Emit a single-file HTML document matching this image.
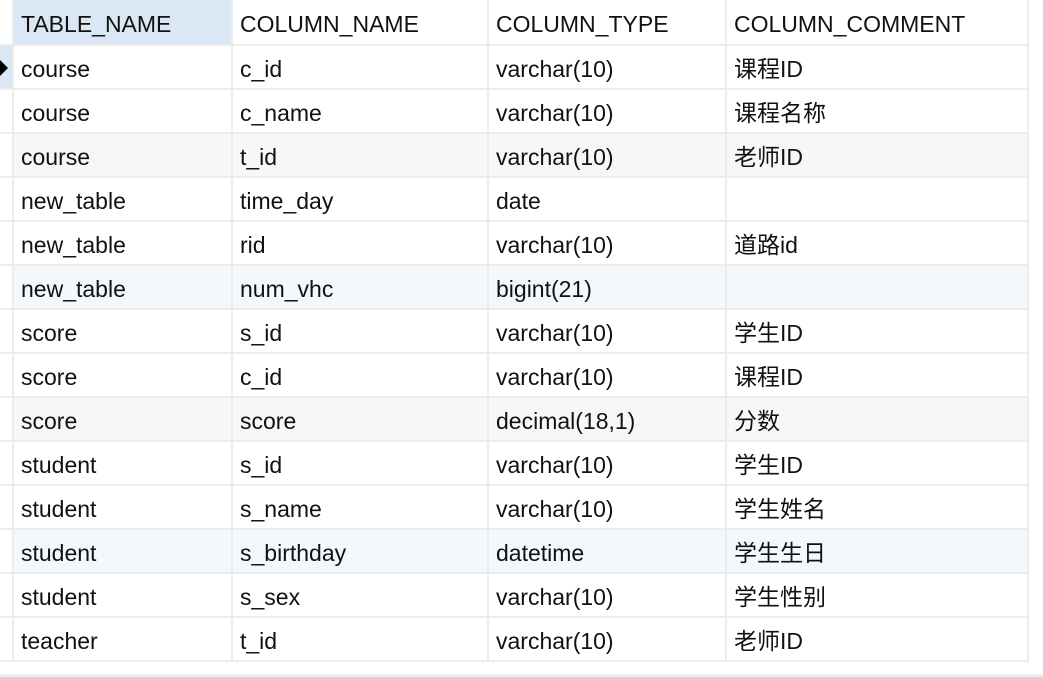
<!DOCTYPE html><html><head><meta charset="utf-8"><style>
body{margin:0;width:1043px;height:677px;background:#fff;overflow:hidden;position:relative;font-family:"Liberation Sans","Noto Sans CJK SC",sans-serif;font-size:23px;color:#111}
.r{position:absolute;left:0;width:1029px;height:42px;}
.c{position:absolute;top:0;height:42px;line-height:47px;padding-left:7px;box-sizing:border-box;border-right:2px solid #ececec;white-space:nowrap}
.c0{left:14px;width:219px}.c1{left:233px;width:256px}.c2{left:489px;width:238px}.c3{left:727px;width:302px}
.g{position:absolute;left:0;width:1029px;height:2px;background:#ececec}
.ind{position:absolute;left:0;width:14px;height:42px;border-right:2px solid #ececec;box-sizing:border-box}
</style></head><body>
<div class="r" style="top:0;height:44px">
<div class="ind" style="height:44px"></div>
<div class="c c0" style="background:#dae8f5;height:44px;line-height:49px">TABLE_NAME</div><div class="c c1" style="height:44px;line-height:49px">COLUMN_NAME</div><div class="c c2" style="height:44px;line-height:49px">COLUMN_TYPE</div><div class="c c3" style="height:44px;line-height:49px">COLUMN_COMMENT</div></div>
<div class="g" style="top:44px"></div>
<div style="position:absolute;top:0;left:0;width:1029px;height:662px;border-right:2px solid #ececec;box-sizing:border-box"></div>
<div id="rows"></div>
<div style="position:absolute;left:0;top:674px;width:1043px;height:3px;background:#eee"></div>
<script>
var d=[["course","c_id","varchar(10)","课程ID"],["course","c_name","varchar(10)","课程名称"],["course","t_id","varchar(10)","老师ID"],["new_table","time_day","date",""],["new_table","rid","varchar(10)","道路id"],["new_table","num_vhc","bigint(21)",""],["score","s_id","varchar(10)","学生ID"],["score","c_id","varchar(10)","课程ID"],["score","score","decimal(18,1)","分数"],["student","s_id","varchar(10)","学生ID"],["student","s_name","varchar(10)","学生姓名"],["student","s_birthday","datetime","学生生日"],["student","s_sex","varchar(10)","学生性别"],["teacher","t_id","varchar(10)","老师ID"]];
var h="";
d.forEach(function(r,i){var t=46+44*i;var bg=(i%3==2)?(i%6==2?"#f7f7f7":"#f3f8fc"):"#fff";
h+='<div class="r" style="top:'+t+'px;background:'+bg+'"><div class="ind" style="background:'+(i==0?"#dae8f5":"#fff")+'">'+(i==0?'<svg width="10" height="16" style="position:absolute;left:0;top:14px"><path d="M0 0L8 8L0 16Z" fill="#000"/></svg>':'')+'</div>';
r.forEach(function(v,j){h+='<div class="c c'+j+'">'+v+'</div>'});
h+='</div><div class="g" style="top:'+(t+42)+'px"></div>';});
document.getElementById("rows").innerHTML=h;
</script>
</body></html>
